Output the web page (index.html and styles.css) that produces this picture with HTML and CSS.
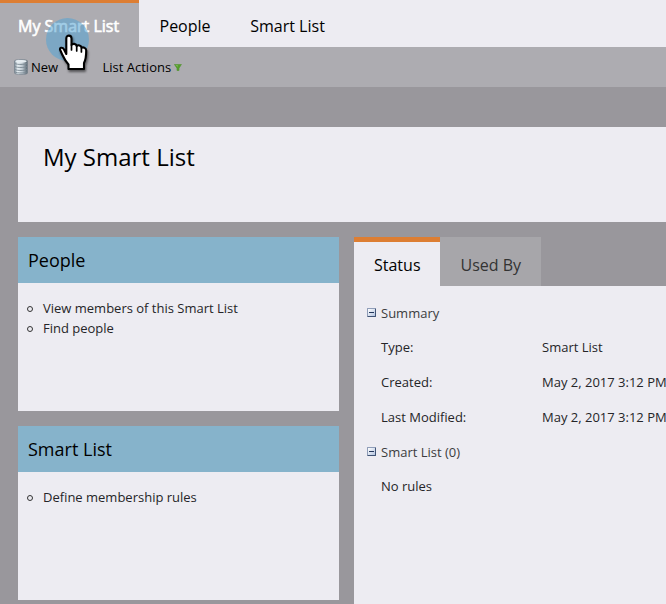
FILE: index.html
```
<!DOCTYPE html>
<html lang="en">
<head>
<meta charset="utf-8">
<title>My Smart List</title>
<link rel="stylesheet" href="styles.css">
</head>
<body>
<nav class="tabs">
  <a class="tab tab-active">My Smart List</a>
  <a class="tab">People</a>
  <a class="tab">Smart List</a>
  <span class="click-halo"></span>
  <svg class="cursor" viewBox="0 0 30 38" width="30" height="38">
    <path d="M8.300 20V4.500C8.300.7 13.500.7 13.500 4.500v6.500c1.200-1.800 4.700-1.500 5.200 1 1.400-1.300 4.400-.7 4.800 1.700 2-.8 4.700.3 4.700 2.800 0 4.500-.3 9-2.200 12.500v6H10.500v-4.500c-3-3.200-4.800-6.800-6.300-10l-2-4.500C1 13.300 4.700 13 6 15.500z" fill="#fff" stroke="#000" stroke-width="2.100" stroke-linejoin="round"/>
    <path d="M13.500 11v5M18.700 12v5M23.400 14v4" fill="none" stroke="#000" stroke-width="1.700" stroke-linecap="round"/>
  </svg>
</nav>
<div class="toolbar">
  <svg class="db" viewBox="0 0 14 16" width="14" height="16">
    <defs><linearGradient id="metal"><stop stop-color="#7d8d99"/><stop offset=".25" stop-color="#e9f0f4"/><stop offset=".6" stop-color="#bdc8d0"/><stop offset="1" stop-color="#53616c"/></linearGradient></defs>
    <path d="M.5 2C.5 0 13.500 0 13.500 2v12C13.500 16 .5 16 .5 14z" fill="url(#metal)" stroke="#77838c" stroke-width=".7"/>
    <ellipse cx="7" cy="2.300" rx="5.700" ry="1.400" fill="#e6edf1"/>
    <path d="M1 4.500c2 1.300 10 1.300 12 0M1 7.500c2 1.300 10 1.300 12 0M1 10.500c2 1.300 10 1.300 12 0M1 13c2 1.300 10 1.300 12 0" fill="none" stroke="#7b8993" stroke-width=".9"/>
  </svg>
  <span class="new">New</span>
  <span>List Actions</span>
  <svg class="arrow" viewBox="0 0 8 7" width="8" height="7"><path d="M.4.400h7L5 4.200v2.300H3V4.200z" fill="#559e2c" stroke="#579436" stroke-width=".7"/><path d="M2 1.200h1.500v1.500z" fill="#a3d47d"/></svg>
</div>
<main class="page">
  <header class="title"><h1>My Smart List</h1></header>
  <div class="columns">
    <div class="left">
      <section class="card">
        <h2>People</h2>
        <ul><li>View members of this Smart List</li><li>Find people</li></ul>
      </section>
      <section class="card">
        <h2>Smart List</h2>
        <ul><li>Define membership rules</li></ul>
      </section>
    </div>
    <section class="right">
      <div class="subtabs"><a class="subtab subtab-active">Status</a><a class="subtab">Used By</a></div>
      <div class="details">
        <h3><span class="toggle"></span>Summary</h3>
        <dl>
          <dt>Type:</dt><dd>Smart List</dd>
          <dt>Created:</dt><dd>May 2, 2017 3:12 PM</dd>
          <dt>Last Modified:</dt><dd>May 2, 2017 3:12 PM</dd>
        </dl>
        <h3><span class="toggle"></span>Smart List (0)</h3>
        <p>No rules</p>
      </div>
    </section>
  </div>
</main>
</body>
</html>
```
FILE: styles.css
```
*, *::before { box-sizing: border-box; }
body, h1, h2, h3, ul, dl, dd, p { margin: 0; padding: 0; font-weight: 400; }
body {
  height: 604px;
  overflow: hidden;
  background: #99979c;
  color: #252528;
  font: 13px/20px "Open Sans", sans-serif;
}
.tabs {
  position: relative;
  display: flex;
  height: 47px;
  background: #edecf2;
  color: #000;
  font-size: 16px;
  line-height: 24px;
}
.tab { padding: 14px 19.2px 0 20.5px; white-space: nowrap; }
.tab-active {
  width: 139px;
  padding: 11px 0 0 18px;
  border-top: 3px solid #dd7e33;
  background: #adacb1;
  color: #fff;
  -webkit-text-stroke: 0.6px #fff;
}
.click-halo {
  position: absolute;
  left: 46px;
  top: 18px;
  width: 43px;
  height: 43px;
  border-radius: 50%;
  background: rgba(83, 164, 211, 0.55);
}
.cursor {
  position: absolute;
  left: 58px;
  top: 34px;
  filter: drop-shadow(1px 2px 1px rgba(0, 0, 0, 0.5));
}
.toolbar {
  display: flex;
  align-items: center;
  height: 40px;
  padding-left: 14px;
  background: #adacb1;
  color: #000;
}
.new { width: 71.5px; margin-left: 3px; }
.arrow { margin-left: 2.5px; }
.page { padding: 40px 0 0 18px; }
.title { height: 95px; padding: 12px 25px; background: #edecf2; }
.title h1 { color: #000; font-size: 24px; line-height: 36px; }
.columns { display: flex; gap: 15px; margin-top: 15px; }
.left { display: flex; flex-direction: column; gap: 15px; width: 321px; }
.card { height: 174px; background: #edecf2; }
.card h2 {
  height: 46px;
  padding-left: 10px;
  background: #86b3cb;
  color: #000;
  font-size: 18px;
  line-height: 47px;
}
.card ul { padding: 15px 0 0 25px; list-style: none; }
.card li { display: flex; align-items: center; }
.card li::before {
  content: "";
  width: 6px;
  height: 6px;
  margin: 1px 10px 0 -16px;
  border: 1px solid #333;
  border-radius: 50%;
}
.right { flex: 1; min-width: 0; height: 367px; }
.subtabs { display: flex; height: 49px; font-size: 16px; line-height: 24px; }
.subtab { width: 101px; padding: 16px 0 0 20.5px; background: #a7a6aa; color: #333; }
.subtab-active {
  width: 86px;
  padding: 11px 0 0 20px;
  border-top: 5px solid #dd7e33;
  background: #edecf2;
  color: #000;
}
.details { height: 318px; padding: 17px 0 0 13px; background: #edecf2; }
.details h3 { display: flex; align-items: center; gap: 5px; color: #3c3c40; font-size: 13px; }
.toggle {
  display: flex;
  align-items: center;
  justify-content: center;
  width: 9px;
  height: 9px;
  margin-top: -1px;
  border: 1px solid #8f9db8;
  border-right-color: #3f5375;
  border-bottom-color: #3f5375;
  border-radius: 1px;
  background: linear-gradient(135deg, #fff, #b4c4e0);
}
.toggle::before { content: ""; width: 5px; height: 1px; background: #23375c; }
.details dl {
  display: grid;
  grid-template-columns: 161px 1fr;
  row-gap: 15px;
  padding: 14px 0 15px 14px;
  white-space: nowrap;
}
.details p { padding: 14px 0 0 14px; }
```
